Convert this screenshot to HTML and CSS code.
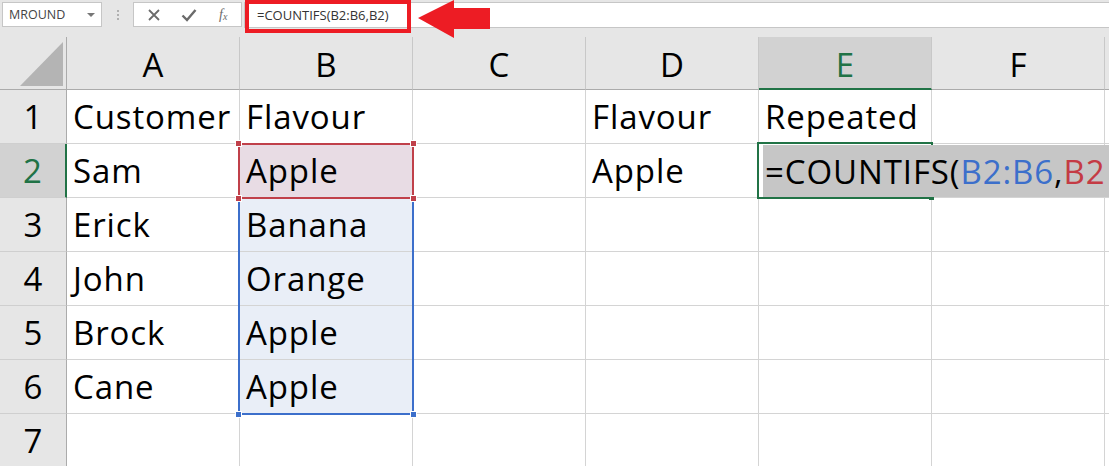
FILE: index.html
```html
<!DOCTYPE html>
<html>
<head>
<meta charset="utf-8">
<link rel="stylesheet" href="styles.css">
</head>
<body>
<div class="app">
  <div class="fbar">
    <div class="namebox"><span>MROUND</span><span class="caret"></span></div>
    <div class="grip"><i></i><i></i><i></i></div>
    <div class="btns">
      <svg class="ic" width="14" height="14" viewBox="0 0 14 14"><path d="M2 2 L12 12 M12 2 L2 12" stroke="#6b6b6b" stroke-width="1.8" fill="none"/></svg>
      <svg class="ic" width="16" height="14" viewBox="0 0 16 14"><path d="M1.5 7.5 L6 12 L14.5 2" stroke="#6b6b6b" stroke-width="2.4" fill="none"/></svg>
      <span class="fx">f<sub>x</sub></span>
    </div>
    <div class="finput"><span class="ftext">=COUNTIFS(B2:B6,B2)</span></div>
    <div class="redbox"></div>
    <svg class="arrow" width="74" height="40" viewBox="0 0 74 40"><polygon points="0,18 36,0 36,8 72,8 72,29 36,29 36,38" fill="#ed1c24"/></svg>
  </div>

  <div class="sheet">
    <div class="corner"><svg width="66" height="52" viewBox="0 0 66 52"><polygon points="63,5 63,49 20,49" fill="#b4b4b4"/></svg></div>
    <div class="ch">A</div><div class="ch">B</div><div class="ch">C</div><div class="ch">D</div><div class="ch ch-active">E</div><div class="ch">F</div><div class="ch ch-last"></div>

    <div class="rh">1</div>
    <div class="c">Customer</div><div class="c">Flavour</div><div class="c"></div><div class="c">Flavour</div><div class="c">Repeated</div><div class="c"></div><div class="c"></div>

    <div class="rh rh-active">2</div>
    <div class="c">Sam</div><div class="c red-fill">Apple</div><div class="c"></div><div class="c">Apple</div><div class="c"></div><div class="c"></div><div class="c"></div>

    <div class="rh">3</div>
    <div class="c">Erick</div><div class="c blue-fill">Banana</div><div class="c"></div><div class="c"></div><div class="c"></div><div class="c"></div><div class="c"></div>

    <div class="rh">4</div>
    <div class="c">John</div><div class="c blue-fill">Orange</div><div class="c"></div><div class="c"></div><div class="c"></div><div class="c"></div><div class="c"></div>

    <div class="rh">5</div>
    <div class="c">Brock</div><div class="c blue-fill">Apple</div><div class="c"></div><div class="c"></div><div class="c"></div><div class="c"></div><div class="c"></div>

    <div class="rh">6</div>
    <div class="c">Cane</div><div class="c blue-fill">Apple</div><div class="c"></div><div class="c"></div><div class="c"></div><div class="c"></div><div class="c"></div>

    <div class="rh">7</div>
    <div class="c"></div><div class="c"></div><div class="c"></div><div class="c"></div><div class="c"></div><div class="c"></div><div class="c"></div>

    <div class="range-blue"><i class="h bl"></i><i class="h br"></i></div>
    <div class="range-red"><i class="h tl"></i><i class="h tr"></i><i class="h bl"></i><i class="h br"></i></div>
    <div class="active-cell"><i class="h br"></i></div>
    <div class="editor">=COUNTIFS(<span class="ref-blue">B2:B6</span>,<span class="ref-red">B2</span></div>
  </div>
</div>
</body>
</html>
```
FILE: styles.css
```css
html, body {
  margin: 0;
  padding: 0;
  background: #e6e6e6;
  overflow: hidden;
}
.app {
  width: 1109px;
  height: 466px;
  overflow: hidden;
  font-family: "Open Sans", "Noto Sans", sans-serif;
}
.fbar {
  position: relative;
  height: 37px;
  display: flex;
  align-items: flex-start;
  padding-top: 2px;
  box-sizing: border-box;
}
.namebox {
  margin-left: 2px;
  width: 100px;
  height: 25px;
  box-sizing: border-box;
  background: #fff;
  border: 1px solid #c6c6c6;
  display: flex;
  align-items: center;
  justify-content: space-between;
  padding: 0 6px 0 6px;
  font-size: 12.5px;
  color: #444;
}
.caret {
  width: 0;
  height: 0;
  border-left: 4px solid transparent;
  border-right: 4px solid transparent;
  border-top: 4px solid #777;
}
.grip {
  width: 31px;
  height: 25px;
  display: flex;
  flex-direction: column;
  align-items: center;
  justify-content: center;
  gap: 2px;
}
.grip i {
  display: block;
  width: 2px;
  height: 2px;
  background: #b0b0b0;
}
.btns {
  width: 109px;
  height: 25px;
  box-sizing: border-box;
  background: #fff;
  border: 1px solid #c6c6c6;
  display: flex;
  align-items: center;
  padding-left: 13px;
  gap: 20px;
}
.fx {
  font-family: "Liberation Serif", "DejaVu Serif", serif;
  font-style: italic;
  font-size: 14px;
  color: #6b6b6b;
  margin-left: 2px;
  line-height: 1;
}
.fx sub {
  font-size: 10px;
  vertical-align: -1px;
}
.finput {
  margin-left: 2px;
  flex: 1;
  height: 26px;
  box-sizing: border-box;
  background: #fff;
  border: 1px solid #c6c6c6;
  border-right: none;
  display: flex;
  align-items: center;
  padding-left: 12px;
  font-size: 13px;
  color: #333;
}
.redbox {
  position: absolute;
  left: 245px;
  top: 0;
  width: 166px;
  height: 33px;
  box-sizing: border-box;
  border: 4px solid #ed1c24;
}
.arrow {
  position: absolute;
  left: 418px;
  top: 0;
  z-index: 5;
}

.sheet {
  position: relative;
  display: grid;
  grid-template-columns: 67px repeat(6, 173px) 1fr;
  grid-template-rows: 53px repeat(7, 54px);
  background: #fff;
  font-size: 33px;
  color: #000;
}
.corner, .ch {
  background: #e6e6e6;
  box-sizing: border-box;
  border-right: 1px solid #c8c8c8;
  border-bottom: 1px solid #ababab;
}
.corner {
  border-right-color: #ababab;
}
.corner svg { display: block; }
.ch {
  display: flex;
  align-items: center;
  justify-content: center;
  padding-top: 2px;
}
.ch-last { border-right: none; }
.ch-active {
  background: #d2d2d2;
  color: #217346;
  border-bottom: 2px solid #217346;
  padding-top: 3px;
}
.rh {
  background: #e6e6e6;
  box-sizing: border-box;
  border-right: 1px solid #ababab;
  border-bottom: 1px solid #cfcfcf;
  display: flex;
  align-items: center;
  justify-content: center;
}
.rh-active {
  background: #d2d2d2;
  color: #217346;
  border-right: 2px solid #217346;
}
.c {
  box-sizing: border-box;
  border-right: 1px solid #d4d4d4;
  border-bottom: 1px solid #d4d4d4;
  display: flex;
  align-items: center;
  padding-left: 6px;
  white-space: nowrap;
  letter-spacing: 0.9px;
}
.red-fill { background: #e8dce4; }
.blue-fill { background: #e9eef7; }

.range-blue, .range-red, .active-cell {
  position: absolute;
  box-sizing: border-box;
}
.range-blue {
  grid-column: 3 / 4;
  grid-row: 3 / 8;
  top: -1px; left: -2px; right: -1px; bottom: -1px;
  border: 2px solid #3c6fcb;
  z-index: 2;
}
.range-red {
  grid-column: 3 / 4;
  grid-row: 3 / 4;
  top: -1px; left: -2px; right: -1px; bottom: -1px;
  border: 2px solid #c0404a;
  z-index: 3;
}
.active-cell {
  grid-column: 6 / 7;
  grid-row: 3 / 4;
  top: -2px; left: -2px; right: -1px; bottom: -1px;
  border: 2px solid #217346;
  z-index: 3;
}
.h {
  position: absolute;
  width: 5px;
  height: 5px;
  outline: 1px solid #fff;
}
.range-blue .h { background: #3c6fcb; }
.range-red .h { background: #c0404a; }
.active-cell .h { background: #217346; outline: none; }
.h.tl { left: -4px; top: -4px; }
.h.tr { right: -4px; top: -4px; }
.h.bl { left: -4px; bottom: -4px; }
.h.br { right: -4px; bottom: -4px; }
.active-cell .h.br { right: -3px; bottom: -3px; }

.editor {
  position: absolute;
  grid-column: 6 / 9;
  grid-row: 3 / 4;
  top: 1px; left: 4px; right: 0; bottom: 1px;
  background: #c6c6c6;
  z-index: 4;
  display: flex;
  align-items: center;
  padding-left: 2px;
  white-space: nowrap;
  overflow: hidden;
  letter-spacing: 0.9px;
}
.ref-blue { color: #3c6fcb; }
.ref-red { color: #c43b44; }
```
